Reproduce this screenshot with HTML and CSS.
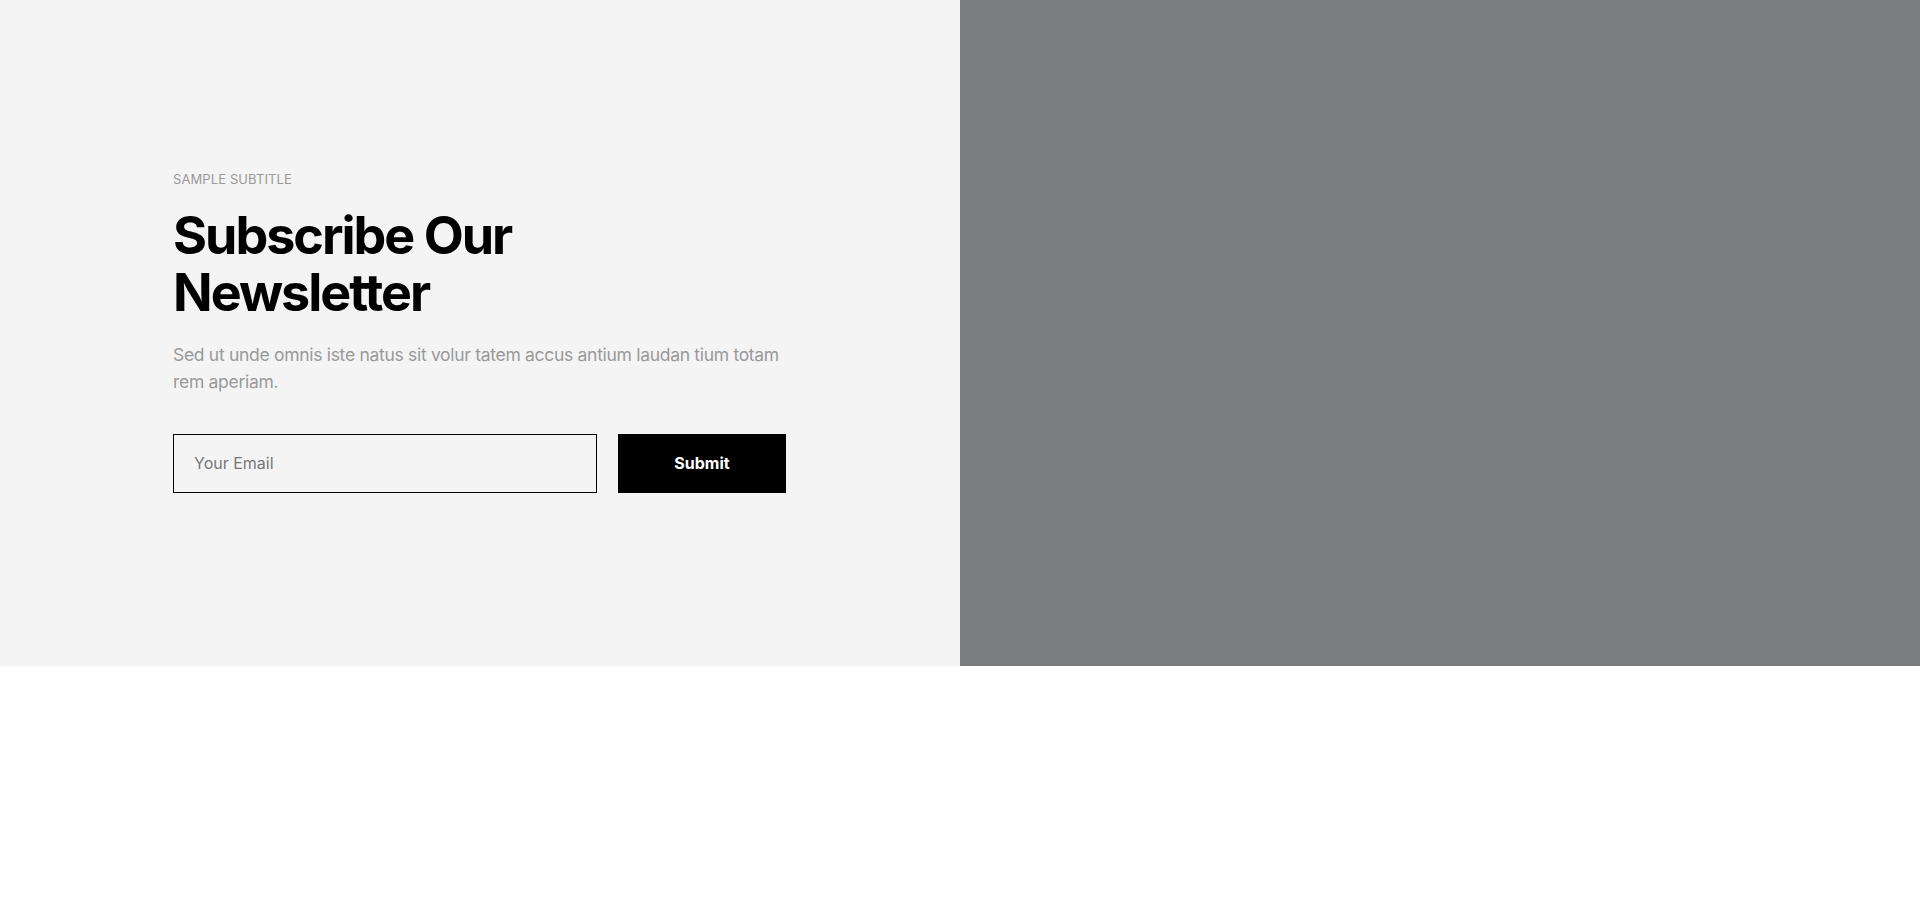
FILE: index.html
```html
<!DOCTYPE html>
<html lang="en">
<head>
    <meta charset="UTF-8">
    <meta name="viewport" content="width=device-width, initial-scale=1.0">
    <title>Newsletter</title>
    <link rel="stylesheet" href="styles.css">
</head>
<body>
    <section class="newsletter">
        <div class="newsletter-content">
            <div class="newsletter-inner">
                <p class="subtitle">SAMPLE SUBTITLE</p>
                <h1>Subscribe Our Newsletter</h1>
                <p class="lead">Sed ut unde omnis iste natus sit volur tatem accus antium laudan tium totam rem aperiam.</p>
                <form class="subscribe-form">
                    <input type="email" placeholder="Your Email">
                    <button type="submit">Submit</button>
                </form>
            </div>
        </div>
        <div class="newsletter-image"></div>
    </section>
</body>
</html>
```

FILE: styles.css
```css
body {
    font-family: Inter, "Noto Sans", sans-serif;
    margin: 0;
    padding: 0;
    background-color: #fff;
    color: #000;
}
.newsletter {
    display: grid;
    grid-template-columns: 1fr 1fr;
    height: 666px;
}
.newsletter-content {
    background-color: #f4f4f4;
    display: flex;
    align-items: center;
    padding: 0 0 3px 173px;
}
.newsletter-inner {
    width: 613px;
}
.newsletter-image {
    background-color: #7b7c7e;
}
.subtitle {
    font-size: 13px;
    color: #999;
    margin: 0 0 20px;
    letter-spacing: 0.1px;
}
h1 {
    font-size: 52px;
    font-weight: 700;
    line-height: 57px;
    letter-spacing: -2px;
    margin: 0 0 20px;
    max-width: 420px;
}
.lead {
    font-size: 17.5px;
    line-height: 27px;
    color: #999;
    margin: 0 0 39px;
    letter-spacing: -0.3px;
}
.subscribe-form {
    display: flex;
    gap: 21px;
}
.subscribe-form input {
    flex: 0 0 424px;
    box-sizing: border-box;
    height: 59px;
    border: 1px solid #000;
    background: transparent;
    padding: 0 20px;
    font-family: inherit;
    font-size: 16px;
    color: #333;
    outline: none;
}
.subscribe-form input::placeholder {
    color: #777;
}
.subscribe-form button {
    flex: 1;
    height: 59px;
    border: none;
    background-color: #000;
    color: #fff;
    font-family: inherit;
    font-size: 16px;
    font-weight: 700;
    cursor: pointer;
}
```
